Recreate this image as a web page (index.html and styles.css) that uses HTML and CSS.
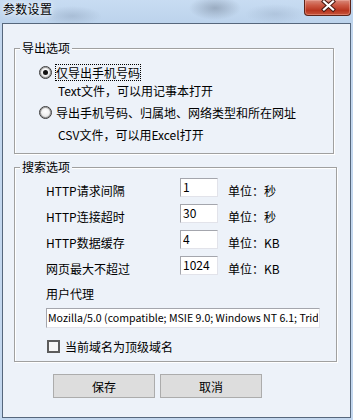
FILE: index.html
```html
<!DOCTYPE html>
<html>
<head>
<meta charset="utf-8">
<title>参数设置</title>
<link rel="stylesheet" href="styles.css">
</head>
<body>
<div class="titlebar">
  <span class="title">参数设置</span>
  <div class="close">
    <svg width="47" height="16" viewBox="0 0 47 16">
      <path d="M20 1.5 L29 9.5 M29 1.5 L20 9.5" stroke="#4a1a12" stroke-width="4.2" stroke-linecap="square" fill="none"/>
      <path d="M20 1.5 L29 9.5 M29 1.5 L20 9.5" stroke="#ffffff" stroke-width="2.2" stroke-linecap="square" fill="none"/>
    </svg>
  </div>
</div>
<div class="client">
  <fieldset class="group g1">
    <legend>导出选项</legend>
    <div class="gbody b1">
      <div class="opt"><span class="radio checked"></span><span class="optlabel focus">仅导出手机号码</span></div>
      <div class="desc d1">Text文件，可以用记事本打开</div>
      <div class="opt opt2"><span class="radio"></span><span class="optlabel">导出手机号码、归属地、网络类型和所在网址</span></div>
      <div class="desc d2">CSV文件，可以用Excel打开</div>
    </div>
  </fieldset>
  <fieldset class="group g2">
    <legend>搜索选项</legend>
    <div class="gbody b2">
      <div class="row"><span class="lbl">HTTP请求间隔</span><input class="num" value="1"><span class="unit">单位：秒</span></div>
      <div class="row"><span class="lbl">HTTP连接超时</span><input class="num" value="30"><span class="unit">单位：秒</span></div>
      <div class="row"><span class="lbl">HTTP数据缓存</span><input class="num" value="4"><span class="unit">单位：KB</span></div>
      <div class="row"><span class="lbl">网页最大不超过</span><input class="num" value="1024"><span class="unit">单位：KB</span></div>
      <div class="ualbl">用户代理</div>
      <input class="ua" value="Mozilla/5.0 (compatible; MSIE 9.0; Windows NT 6.1; Trident/5.0)">
      <div class="chk"><span class="box"></span><span class="chklabel">当前域名为顶级域名</span></div>
    </div>
  </fieldset>
  <div class="buttons">
    <button class="btn">保存</button>
    <button class="btn">取消</button>
  </div>
</div>
</body>
</html>
```

FILE: styles.css
```css
html, body {
  margin: 0;
  padding: 0;
}
body {
  width: 353px;
  height: 420px;
  overflow: hidden;
  background: #c3d7ee;
  font-family: "Noto Sans CJK SC", "Noto Sans", sans-serif;
  font-size: 12px;
  color: #111;
}
.titlebar {
  height: 23px;
  display: flex;
  align-items: flex-start;
  background:
    radial-gradient(ellipse 30px 10px at 72px 16px, rgba(150,170,195,0.55), rgba(150,170,195,0) 100%),
    radial-gradient(ellipse 26px 12px at 215px 8px, rgba(120,135,155,0.55), rgba(120,135,155,0) 100%),
    radial-gradient(ellipse 30px 10px at 275px 14px, rgba(150,170,195,0.4), rgba(150,170,195,0) 100%),
    linear-gradient(#c8dcf2, #bcd3ec);
}
.title {
  padding-left: 3px;
  line-height: 18px;
  font-size: 12px;
  color: #000;
  letter-spacing: 0.3px;
  text-shadow: 0 0 4px rgba(255,255,255,0.9), 0 0 8px rgba(255,255,255,0.7);
}
.close {
  margin-left: auto;
  margin-right: 2px;
  width: 47px;
  height: 16px;
  box-sizing: border-box;
  border: 1px solid #5c2318;
  border-top: none;
  border-radius: 0 0 4px 4px;
  background: linear-gradient(#d98a7c 0%, #cc5a45 35%, #b8351f 70%, #c8553c 100%);
  box-shadow: inset 0 0 0 1px rgba(255,200,190,0.35);
  overflow: hidden;
}
.close svg {
  display: block;
  margin-left: -1px;
}
.client {
  margin-left: 2px;
  width: 349px;
  height: 395px;
  box-sizing: border-box;
  border: 1px solid #56677c;
  background: #edf2f9;
  overflow: hidden;
}
.group {
  margin: 0 0 0 11px;
  padding: 0;
  border: 1px solid #a0a0a0;
  box-shadow: 1px 1px 0 #ffffff, inset 1px 1px 0 #ffffff;
  min-width: 0;
  box-sizing: border-box;
}
.g1 {
  margin-top: 17px;
  width: 320px;
}
.g2 {
  margin-top: 6px;
  width: 323px;
}
legend {
  margin-left: 5px;
  padding: 0 2px;
  line-height: 14px;
  font-size: 12px;
  background: #edf2f9;
  color: #000;
}
.b1 {
  padding: 7px 0 8px 24px;
}
.opt {
  display: flex;
  align-items: center;
  height: 20px;
}
.opt2 {
  margin-top: 2px;
}
.radio {
  width: 13px;
  height: 13px;
  box-sizing: border-box;
  border-radius: 50%;
  border: 1px solid #3a3a3a;
  background: radial-gradient(circle at 50% 40%, #ffffff 0%, #f0f0f0 45%, #c8c8c8 100%);
  box-shadow: inset 0 0 0 1px #9a9a9a;
  display: flex;
  align-items: center;
  justify-content: center;
  flex: none;
}
.radio.checked::after {
  content: "";
  width: 5px;
  height: 5px;
  border-radius: 50%;
  background: #111;
}
.optlabel {
  margin-left: 3px;
  line-height: 15px;
  border: 1px dotted transparent;
  color: #000;
}
.optlabel.focus {
  border-color: #000;
}
.desc {
  padding-left: 19px;
  color: #000;
}
.d1 {
  line-height: 18px;
}
.d2 {
  margin-top: 3px;
  line-height: 20px;
}
.b2 {
  padding: 4px 0 5px 31px;
}
.row {
  display: flex;
  align-items: flex-start;
  height: 26px;
}
.lbl {
  width: 134px;
  line-height: 25px;
  color: #000;
}
.num, .ua {
  box-sizing: border-box;
  margin: 0;
  padding: 0 2px;
  border: 1px solid #e2e3ea;
  border-top-color: #a4a6ad;
  border-left-color: #a4a6ad;
  background: #ffffff;
  font-family: "Noto Sans CJK SC", "Noto Sans", sans-serif;
  font-size: 12px;
  color: #000;
  outline: none;
}
.num {
  width: 38px;
  height: 19px;
  line-height: 13px;
  padding-bottom: 3px;
}
.unit {
  margin-left: 10px;
  line-height: 25px;
  color: #000;
}
.ualbl {
  margin-top: 2px;
  line-height: 20px;
  color: #000;
}
.ua {
  display: block;
  margin-top: 4px;
  width: 274px;
  height: 20px;
  padding: 0 1px 2px 1px;
  font-size: 10.6px;
}
.chk {
  margin-top: 8px;
  height: 20px;
  display: flex;
  align-items: center;
}
.box {
  margin-left: 1px;
  width: 13px;
  height: 13px;
  box-sizing: border-box;
  border: 2px solid #5c5c5c;
  background: #f6f6f6;
  flex: none;
}
.chklabel {
  margin-left: 5px;
  color: #000;
}
.buttons {
  margin: 12px 0 0 50px;
  display: flex;
  gap: 5px;
}
.btn {
  width: 102px;
  height: 24px;
  margin: 0;
  padding: 0;
  box-sizing: border-box;
  border: 1px solid #acacac;
  background: #dddddd;
  font-family: "Noto Sans CJK SC", "Noto Sans", sans-serif;
  font-size: 12px;
  color: #000;
  border-radius: 0;
}
```
